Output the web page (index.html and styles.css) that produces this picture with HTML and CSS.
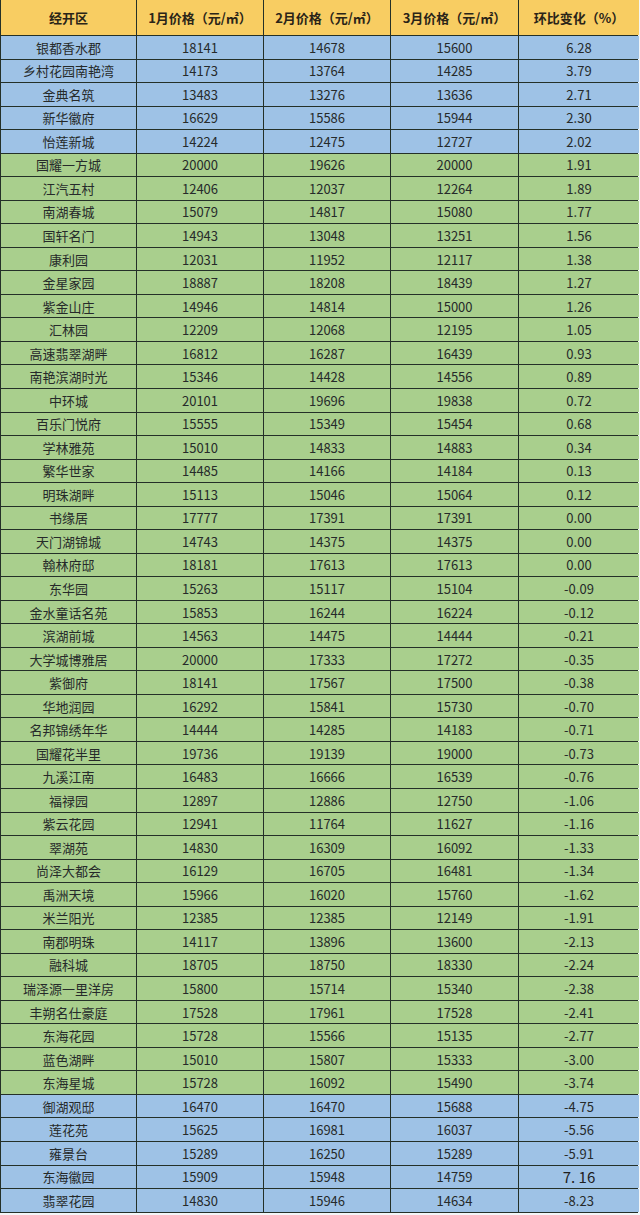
FILE: index.html
```html
<!DOCTYPE html>
<html lang="zh-CN">
<head>
<meta charset="utf-8">
<title>经开区房价</title>
<link rel="stylesheet" href="styles.css">
</head>
<body>
<div class="sheet">
  <div class="cell head">经开区</div><div class="cell head">1月价格（元/㎡）</div><div class="cell head">2月价格（元/㎡）</div><div class="cell head">3月价格（元/㎡）</div><div class="cell head">环比变化（%）</div>

  <div class="cell b">银都香水郡</div><div class="cell b">18141</div><div class="cell b">14678</div><div class="cell b">15600</div><div class="cell b">6.28</div>
  <div class="cell b">乡村花园南艳湾</div><div class="cell b">14173</div><div class="cell b">13764</div><div class="cell b">14285</div><div class="cell b">3.79</div>
  <div class="cell b">金典名筑</div><div class="cell b">13483</div><div class="cell b">13276</div><div class="cell b">13636</div><div class="cell b">2.71</div>
  <div class="cell b">新华徽府</div><div class="cell b">16629</div><div class="cell b">15586</div><div class="cell b">15944</div><div class="cell b">2.30</div>
  <div class="cell b">怡莲新城</div><div class="cell b">14224</div><div class="cell b">12475</div><div class="cell b">12727</div><div class="cell b">2.02</div>

  <div class="cell g">国耀一方城</div><div class="cell g">20000</div><div class="cell g">19626</div><div class="cell g">20000</div><div class="cell g">1.91</div>
  <div class="cell g">江汽五村</div><div class="cell g">12406</div><div class="cell g">12037</div><div class="cell g">12264</div><div class="cell g">1.89</div>
  <div class="cell g">南湖春城</div><div class="cell g">15079</div><div class="cell g">14817</div><div class="cell g">15080</div><div class="cell g">1.77</div>
  <div class="cell g">国轩名门</div><div class="cell g">14943</div><div class="cell g">13048</div><div class="cell g">13251</div><div class="cell g">1.56</div>
  <div class="cell g">康利园</div><div class="cell g">12031</div><div class="cell g">11952</div><div class="cell g">12117</div><div class="cell g">1.38</div>
  <div class="cell g">金星家园</div><div class="cell g">18887</div><div class="cell g">18208</div><div class="cell g">18439</div><div class="cell g">1.27</div>
  <div class="cell g">紫金山庄</div><div class="cell g">14946</div><div class="cell g">14814</div><div class="cell g">15000</div><div class="cell g">1.26</div>
  <div class="cell g">汇林园</div><div class="cell g">12209</div><div class="cell g">12068</div><div class="cell g">12195</div><div class="cell g">1.05</div>
  <div class="cell g">高速翡翠湖畔</div><div class="cell g">16812</div><div class="cell g">16287</div><div class="cell g">16439</div><div class="cell g">0.93</div>
  <div class="cell g">南艳滨湖时光</div><div class="cell g">15346</div><div class="cell g">14428</div><div class="cell g">14556</div><div class="cell g">0.89</div>
  <div class="cell g">中环城</div><div class="cell g">20101</div><div class="cell g">19696</div><div class="cell g">19838</div><div class="cell g">0.72</div>
  <div class="cell g">百乐门悦府</div><div class="cell g">15555</div><div class="cell g">15349</div><div class="cell g">15454</div><div class="cell g">0.68</div>
  <div class="cell g">学林雅苑</div><div class="cell g">15010</div><div class="cell g">14833</div><div class="cell g">14883</div><div class="cell g">0.34</div>
  <div class="cell g">繁华世家</div><div class="cell g">14485</div><div class="cell g">14166</div><div class="cell g">14184</div><div class="cell g">0.13</div>
  <div class="cell g">明珠湖畔</div><div class="cell g">15113</div><div class="cell g">15046</div><div class="cell g">15064</div><div class="cell g">0.12</div>
  <div class="cell g">书缘居</div><div class="cell g">17777</div><div class="cell g">17391</div><div class="cell g">17391</div><div class="cell g">0.00</div>
  <div class="cell g">天门湖锦城</div><div class="cell g">14743</div><div class="cell g">14375</div><div class="cell g">14375</div><div class="cell g">0.00</div>
  <div class="cell g">翰林府邸</div><div class="cell g">18181</div><div class="cell g">17613</div><div class="cell g">17613</div><div class="cell g">0.00</div>
  <div class="cell g">东华园</div><div class="cell g">15263</div><div class="cell g">15117</div><div class="cell g">15104</div><div class="cell g">-0.09</div>
  <div class="cell g">金水童话名苑</div><div class="cell g">15853</div><div class="cell g">16244</div><div class="cell g">16224</div><div class="cell g">-0.12</div>
  <div class="cell g">滨湖前城</div><div class="cell g">14563</div><div class="cell g">14475</div><div class="cell g">14444</div><div class="cell g">-0.21</div>
  <div class="cell g">大学城博雅居</div><div class="cell g">20000</div><div class="cell g">17333</div><div class="cell g">17272</div><div class="cell g">-0.35</div>
  <div class="cell g">紫御府</div><div class="cell g">18141</div><div class="cell g">17567</div><div class="cell g">17500</div><div class="cell g">-0.38</div>
  <div class="cell g">华地润园</div><div class="cell g">16292</div><div class="cell g">15841</div><div class="cell g">15730</div><div class="cell g">-0.70</div>
  <div class="cell g">名邦锦绣年华</div><div class="cell g">14444</div><div class="cell g">14285</div><div class="cell g">14183</div><div class="cell g">-0.71</div>
  <div class="cell g">国耀花半里</div><div class="cell g">19736</div><div class="cell g">19139</div><div class="cell g">19000</div><div class="cell g">-0.73</div>
  <div class="cell g">九溪江南</div><div class="cell g">16483</div><div class="cell g">16666</div><div class="cell g">16539</div><div class="cell g">-0.76</div>
  <div class="cell g">福禄园</div><div class="cell g">12897</div><div class="cell g">12886</div><div class="cell g">12750</div><div class="cell g">-1.06</div>
  <div class="cell g">紫云花园</div><div class="cell g">12941</div><div class="cell g">11764</div><div class="cell g">11627</div><div class="cell g">-1.16</div>
  <div class="cell g">翠湖苑</div><div class="cell g">14830</div><div class="cell g">16309</div><div class="cell g">16092</div><div class="cell g">-1.33</div>
  <div class="cell g">尚泽大都会</div><div class="cell g">16129</div><div class="cell g">16705</div><div class="cell g">16481</div><div class="cell g">-1.34</div>
  <div class="cell g">禹洲天境</div><div class="cell g">15966</div><div class="cell g">16020</div><div class="cell g">15760</div><div class="cell g">-1.62</div>
  <div class="cell g">米兰阳光</div><div class="cell g">12385</div><div class="cell g">12385</div><div class="cell g">12149</div><div class="cell g">-1.91</div>
  <div class="cell g">南郡明珠</div><div class="cell g">14117</div><div class="cell g">13896</div><div class="cell g">13600</div><div class="cell g">-2.13</div>
  <div class="cell g">融科城</div><div class="cell g">18705</div><div class="cell g">18750</div><div class="cell g">18330</div><div class="cell g">-2.24</div>
  <div class="cell g">瑞泽源一里洋房</div><div class="cell g">15800</div><div class="cell g">15714</div><div class="cell g">15340</div><div class="cell g">-2.38</div>
  <div class="cell g">丰朔名仕豪庭</div><div class="cell g">17528</div><div class="cell g">17961</div><div class="cell g">17528</div><div class="cell g">-2.41</div>
  <div class="cell g">东海花园</div><div class="cell g">15728</div><div class="cell g">15566</div><div class="cell g">15135</div><div class="cell g">-2.77</div>
  <div class="cell g">蓝色湖畔</div><div class="cell g">15010</div><div class="cell g">15807</div><div class="cell g">15333</div><div class="cell g">-3.00</div>
  <div class="cell g">东海星城</div><div class="cell g">15728</div><div class="cell g">16092</div><div class="cell g">15490</div><div class="cell g">-3.74</div>

  <div class="cell b">御湖观邸</div><div class="cell b">16470</div><div class="cell b">16470</div><div class="cell b">15688</div><div class="cell b">-4.75</div>
  <div class="cell b">莲花苑</div><div class="cell b">15625</div><div class="cell b">16981</div><div class="cell b">16037</div><div class="cell b">-5.56</div>
  <div class="cell b">雍景台</div><div class="cell b">15289</div><div class="cell b">16250</div><div class="cell b">15289</div><div class="cell b">-5.91</div>
  <div class="cell b">东海徽园</div><div class="cell b">15909</div><div class="cell b">15948</div><div class="cell b">14759</div><div class="cell b odd">7. 16</div>
  <div class="cell b">翡翠花园</div><div class="cell b">14830</div><div class="cell b">15946</div><div class="cell b">14634</div><div class="cell b">-8.23</div>
</div>
</body>
</html>
```

FILE: styles.css
```css
html, body {
  margin: 0;
  padding: 0;
  background: #f4f6f8;
}

.sheet {
  display: grid;
  width: 637px;
  grid-template-columns: 135px 126px 126px 127px 120px;
  grid-template-rows: 35px;
  grid-auto-rows: 22.54px;
  gap: 1px;
  background: #243028;
  border-left: 1px solid #243028;
  border-bottom: 1px solid #243028;
  font-family: "Noto Sans CJK SC", "Noto Sans", sans-serif;
  font-size: 13px;
  color: #262a2a;
}

.cell {
  display: flex;
  align-items: center;
  justify-content: center;
  white-space: nowrap;
  line-height: 1;
}

.head {
  background: #f8cd62;
  font-weight: 700;
  font-size: 13px;
  color: #2a2418;
}

.b {
  background: #9ec2e6;
}

.g {
  background: #a9cf8d;
}

.odd {
  font-size: 15px;
  color: #1e2020;
}
```
